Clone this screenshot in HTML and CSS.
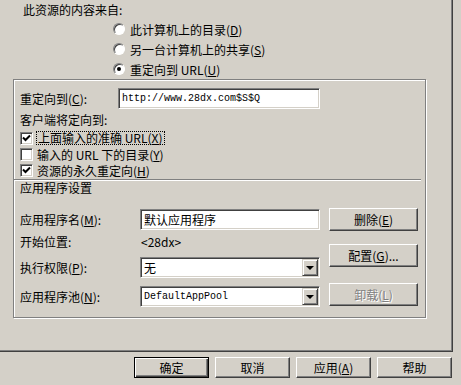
FILE: index.html
```html
<!DOCTYPE html>
<html lang="zh-CN">
<head>
  <meta charset="UTF-8">
  <title>属性</title>
  <link rel="stylesheet" href="styles.css">
</head>
<body>
  <div class="page">
    <div class="source-title">此资源的内容来自:</div>
    <div class="radios">
      <div class="radio-row"><span class="radio"></span>此计算机上的目录(<u>D</u>)</div>
      <div class="radio-row"><span class="radio"></span>另一台计算机上的共享(<u>S</u>)</div>
      <div class="radio-row"><span class="radio checked"></span>重定向到 URL(<u>U</u>)</div>
    </div>

    <div class="panel">
      <div class="redirect-row">
        <span class="redirect-label">重定向到(<u>C</u>):</span>
        <div class="textbox url mono">http://www.28dx.com$S$Q</div>
      </div>
      <div class="client-title">客户端将定向到:</div>
      <div class="check-row">
        <span class="check"><svg width="9" height="9" viewBox="0 0 9 9"><polyline points="1,3.5 3.5,6 8,1.5" fill="none" stroke="#000" stroke-width="2"/></svg></span>
        <span class="focus">上面输入的准确 URL(<u>X</u>)</span>
      </div>
      <div class="check-row">
        <span class="check"></span>
        <span>输入的 URL 下的目录(<u>Y</u>)</span>
      </div>
      <div class="check-row">
        <span class="check"><svg width="9" height="9" viewBox="0 0 9 9"><polyline points="1,3.5 3.5,6 8,1.5" fill="none" stroke="#000" stroke-width="2"/></svg></span>
        <span>资源的永久重定向(<u>H</u>)</span>
      </div>
      <div class="separator"></div>
      <div class="group-title">应用程序设置</div>

      <div class="app">
        <div class="app-fields">
          <div class="field f-name">
            <span class="field-label">应用程序名(<u>M</u>):</span>
            <div class="textbox">默认应用程序</div>
          </div>
          <div class="field f-start">
            <span class="field-label">开始位置:</span>
            <span class="start-value">&lt;28dx&gt;</span>
          </div>
          <div class="field f-perm">
            <span class="field-label">执行权限(<u>P</u>):</span>
            <div class="combo">
              <span class="combo-text">无</span>
              <span class="combo-btn"><span class="arrow"></span></span>
            </div>
          </div>
          <div class="field f-pool">
            <span class="field-label">应用程序池(<u>N</u>):</span>
            <div class="combo">
              <span class="combo-text mono">DefaultAppPool</span>
              <span class="combo-btn"><span class="arrow"></span></span>
            </div>
          </div>
        </div>
        <div class="app-buttons">
          <button class="btn b-remove">删除(<u>E</u>)</button>
          <button class="btn b-config">配置(<u>G</u>)...</button>
          <button class="btn b-unload" disabled>卸载(<u>L</u>)</button>
        </div>
      </div>
    </div>
  </div>

  <div class="dialog-buttons">
    <button class="btn default">确定</button>
    <button class="btn">取消</button>
    <button class="btn">应用(<u>A</u>)</button>
    <button class="btn">帮助</button>
  </div>
</body>
</html>
```

FILE: styles.css
```css
* {
  margin: 0;
  padding: 0;
  box-sizing: border-box;
}
body {
  font-family: "Noto Sans CJK SC", sans-serif;
  font-size: 12px;
  color: #000;
  background: #d4d0c8;
  width: 461px;
  height: 385px;
  overflow: hidden;
}
u {
  text-decoration: underline;
}
.mono {
  font-family: "Liberation Mono", monospace;
  font-size: 10px;
}
.page {
  width: 453px;
  height: 352px;
  border-right: 1px solid #404040;
  border-bottom: 1px solid #404040;
  box-shadow: inset -1px -1px #808080;
}
.source-title {
  padding-left: 23px;
  height: 19px;
  line-height: 19px;
}
.radios {
  padding-left: 113px;
}
.radio-row {
  display: flex;
  align-items: center;
  height: 20px;
}
.radio {
  position: relative;
  width: 12px;
  height: 12px;
  margin-right: 5px;
  border-radius: 50%;
  background: #fff;
  border: 1px solid;
  border-color: #808080 #fff #fff #808080;
  box-shadow: inset 1px 1px #404040, 0 0 0 0 #d4d0c8;
}
.radio.checked::after {
  content: "";
  position: absolute;
  left: 3px;
  top: 3px;
  width: 4px;
  height: 4px;
  border-radius: 50%;
  background: #000;
}
.panel {
  margin-left: 13px;
  width: 413px;
  height: 239px;
  border: 1px solid #808080;
  box-shadow: inset 1px 1px #fff, 1px 1px #fff;
  padding: 8px 0 0 6px;
}
.redirect-row {
  display: flex;
  align-items: center;
  height: 21px;
}
.redirect-label {
  width: 98px;
}
.textbox {
  background: #fff;
  border: 1px solid;
  border-color: #808080 #fff #fff #808080;
  box-shadow: inset 1px 1px #404040, inset -1px -1px #d4d0c8;
  height: 21px;
  display: flex;
  align-items: center;
  padding-left: 3px;
}
.url {
  width: 202px;
}
.client-title {
  margin-top: 3px;
  height: 16px;
  line-height: 16px;
}
.check-row {
  display: flex;
  align-items: center;
  height: 16px;
}
.check-row:first-of-type {
  margin-top: 2px;
}
.client-title + .check-row {
  margin-top: 2px;
}
.check {
  width: 13px;
  height: 13px;
  margin-right: 4px;
  background: #fff;
  border: 1px solid;
  border-color: #808080 #fff #fff #808080;
  box-shadow: inset 1px 1px #404040, inset -1px -1px #d4d0c8;
  display: flex;
  align-items: center;
  justify-content: center;
}
.check svg {
  display: block;
}
.focus {
  outline: 1px dotted #000;
  outline-offset: 0;
  line-height: 12px;
  padding: 0 1px;
}
.separator {
  margin: 1px 0 0 -6px;
  width: 407px;
  height: 2px;
  border-top: 1px solid #808080;
  border-bottom: 1px solid #fff;
}
.group-title {
  height: 14px;
  line-height: 14px;
}
.app {
  display: flex;
  margin-top: 13px;
}
.app-fields {
  width: 300px;
}
.field {
  display: flex;
  align-items: center;
}
.field-label {
  width: 120px;
}
.field .textbox,
.combo {
  width: 180px;
}
.f-name {
  height: 23px;
}
.f-start {
  height: 20px;
}
.start-value {
  padding-left: 1px;
}
.f-perm {
  margin-top: 6px;
  height: 21px;
}
.f-pool {
  margin-top: 8px;
  height: 21px;
}
.combo {
  height: 21px;
  background: #fff;
  border: 1px solid;
  border-color: #808080 #fff #fff #808080;
  box-shadow: inset 1px 1px #404040, inset -1px -1px #d4d0c8;
  display: flex;
  align-items: center;
  padding: 1px 1px 1px 3px;
}
.combo-text {
  flex: 1;
}
.combo-btn {
  width: 16px;
  height: 17px;
  background: #d4d0c8;
  border: 1px solid;
  border-color: #d4d0c8 #404040 #404040 #d4d0c8;
  box-shadow: inset 1px 1px #fff, inset -1px -1px #808080;
  display: flex;
  align-items: center;
  justify-content: center;
}
.arrow {
  width: 0;
  height: 0;
  border-left: 4px solid transparent;
  border-right: 4px solid transparent;
  border-top: 4px solid #000;
  margin-top: 1px;
}
.app-buttons {
  margin-left: 9px;
  display: flex;
  flex-direction: column;
}
.btn {
  font-family: "Noto Sans CJK SC", sans-serif;
  font-size: 12px;
  color: #000;
  background: #d4d0c8;
  border: 1px solid;
  border-color: #fff #404040 #404040 #fff;
  box-shadow: inset -1px -1px #808080;
}
.app-buttons .btn {
  width: 89px;
  height: 23px;
}
.b-config {
  margin-top: 13px;
}
.b-unload {
  margin-top: 16px;
}
.btn:disabled {
  color: #808080;
  text-shadow: 1px 1px #fff;
}
.dialog-buttons {
  display: flex;
  gap: 6px;
  margin: 5px 0 0 134px;
}
.dialog-buttons .btn {
  width: 75px;
  height: 21px;
}
.btn.default {
  border: 1px solid #000;
  box-shadow: inset 1px 1px #fff, inset -1px -1px #404040, inset -2px -2px #808080;
}
```
